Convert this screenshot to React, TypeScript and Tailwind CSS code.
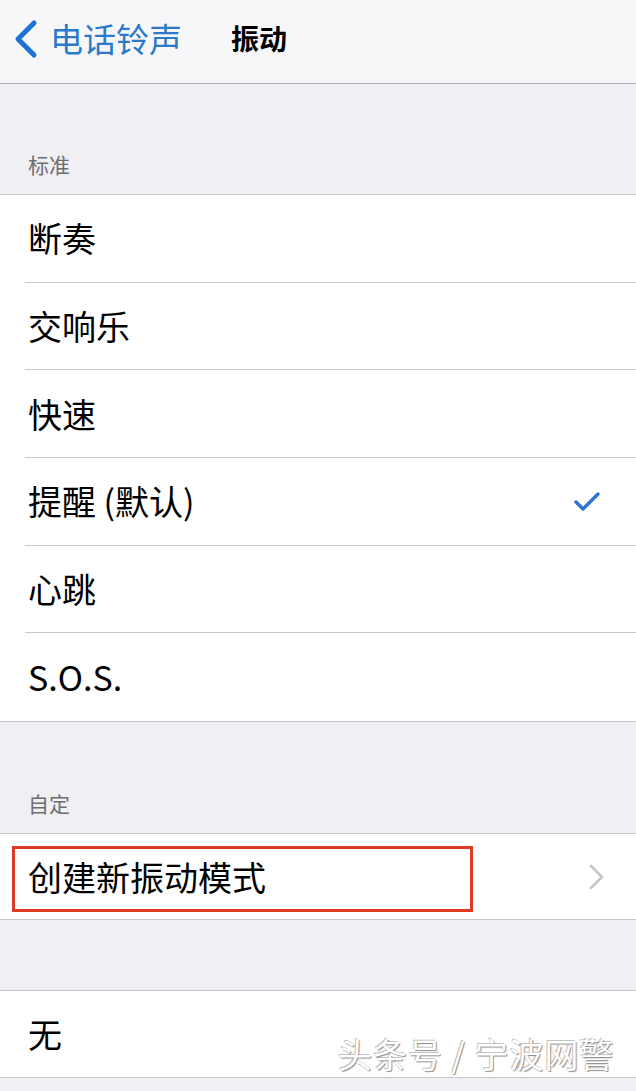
const font = { fontFamily: '"Noto Sans CJK SC", "Noto Sans", sans-serif' };

interface RowProps {
  label: string;
  checked?: boolean;
  last?: boolean;
}

function Row({ label, checked, last }: RowProps) {
  return (
    <div className="bg-white pl-[25px]">
      <div
        className={`flex h-[87.7px] items-center justify-between pr-[34px] ${
          last ? '' : 'border-b border-[#c8c7cc]'
        }`}
      >
        <span className="pl-[3px] text-[34px] leading-none text-black">{label}</span>
        {checked && (
          <svg width="28" height="22" viewBox="0 0 28 22" className="mr-[1px]">
            <path
              d="M3 12 L10 19 L25 4"
              fill="none"
              stroke="#2b74d2"
              strokeWidth="3.4"
              strokeLinecap="round"
              strokeLinejoin="round"
            />
          </svg>
        )}
      </div>
    </div>
  );
}

function SectionHeader({ title, height }: { title: string; height: string }) {
  return (
    <div className={`flex items-end bg-[#efeff4] pb-[19px] pl-[28px] ${height}`}>
      <span className="text-[21px] leading-none text-[#6d6d72]">{title}</span>
    </div>
  );
}

export default function App() {
  const standard = ['断奏', '交响乐', '快速', '提醒 (默认)', '心跳', 'S.O.S.'];

  return (
    <div className="min-h-[1091px] w-[636px] bg-[#efeff4]" style={font}>
      {/* nav bar */}
      <div className="relative flex h-[84px] items-center border-b border-[#b2b2b6] bg-[#f7f7f9] pb-[6px]">
        <div className="flex items-center pl-[12px]">
          <svg width="28" height="40" viewBox="0 0 28 40">
            <path
              d="M22 4 L6 20 L22 36"
              fill="none"
              stroke="#1a74d4"
              strokeWidth="5"
              strokeLinecap="round"
              strokeLinejoin="round"
            />
          </svg>
          <span className="ml-[10px] text-[33px] leading-none text-[#2a7ac9]">电话铃声</span>
        </div>
        <span className="absolute left-[231px] top-[24px] text-[28px] font-bold leading-none text-black">
          振动
        </span>
      </div>

      <SectionHeader title="标准" height="h-[110px]" />

      <div className="border-y border-[#c8c7cc]">
        {standard.map((s, i) => (
          <Row key={s} label={s} checked={i === 3} last={i === standard.length - 1} />
        ))}
      </div>

      <SectionHeader title="自定" height="h-[111px]" />

      <div className="relative border-y border-[#c8c7cc] bg-white">
        <div className="flex h-[85px] items-center justify-between pl-[28px] pr-[32px]">
          <span className="text-[34px] leading-none text-black">创建新振动模式</span>
          <svg width="16" height="26" viewBox="0 0 16 26">
            <path
              d="M3 2 L14 13 L3 24"
              fill="none"
              stroke="#c4c4c9"
              strokeWidth="2.6"
              strokeLinecap="round"
              strokeLinejoin="round"
            />
          </svg>
        </div>
        {/* annotation box */}
        <div className="absolute left-[12px] top-[12px] h-[66px] w-[461px] border-[3px] border-[#e03a22]" />
      </div>

      <div className="h-[70px]" />

      <div className="relative border-y border-[#c8c7cc] bg-white">
        <div className="flex h-[86px] items-center pl-[28px]">
          <span className="text-[34px] leading-none text-black">无</span>
        </div>
        {/* watermark */}
        <span className="absolute left-[338px] top-[46px] text-[34px] leading-none tracking-[1px] text-white [text-shadow:1px_1px_1px_#8a8a8a,-1px_-1px_0_#c2c2c2]">
          头条号 / 宁波网警
        </span>
      </div>
    </div>
  );
}
